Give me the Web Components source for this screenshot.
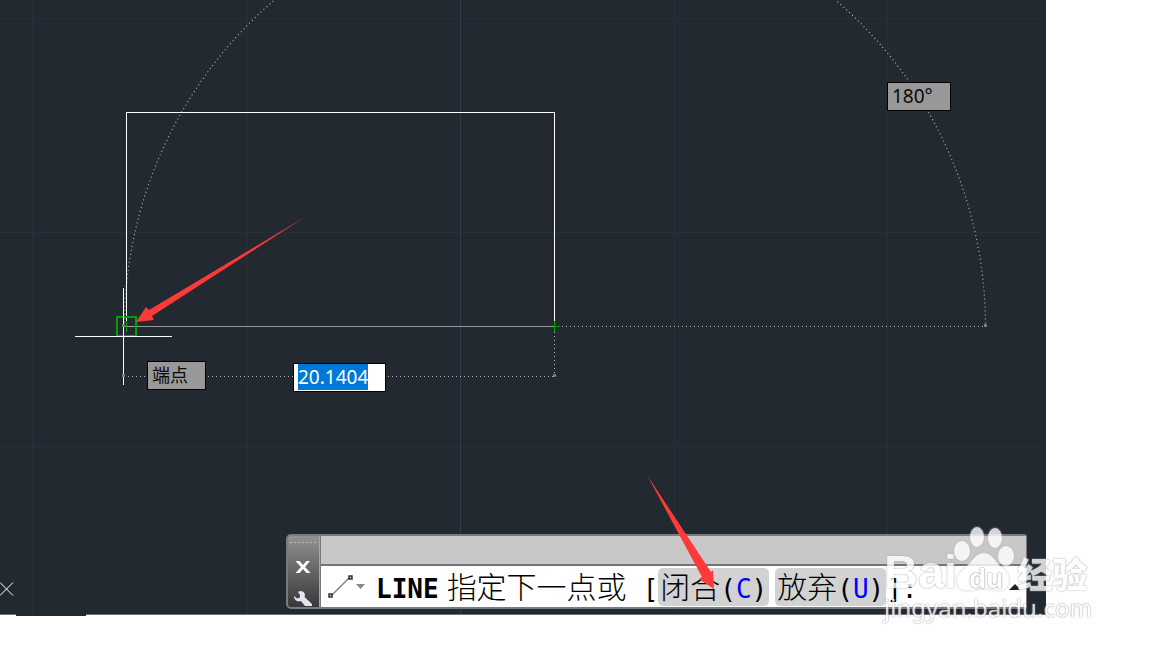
<!DOCTYPE html>
<html lang="zh-CN">
<head>
<meta charset="utf-8">
<title>CAD - LINE</title>
<style>
html, body { margin: 0; height: 100%; background: #fff; overflow: hidden; }
body { font-family: "Noto Sans", "Noto Sans CJK SC", sans-serif; }
</style>
</head>
<body>
<cad-workspace></cad-workspace>

<script>
const define = (name, html, ready) => {
  const tpl = document.createElement('template');
  tpl.innerHTML = html;
  customElements.define(name, class extends HTMLElement {
    constructor() {
      super();
      this.attachShadow({ mode: 'open' }).append(tpl.content.cloneNode(true));
    }
    connectedCallback() { if (ready) ready(this); }
  });
};

define('cad-tip', `
<style>
:host { display: block; box-sizing: border-box; padding: 0 17px 0 4px; border: 1px solid #000; background: #989898; color: #0a0a0a; font-size: 18px; line-height: 27px; white-space: nowrap; }
</style>
<slot></slot>`);

define('cad-length', `
<style>
:host { display: block; }
input { display: block; box-sizing: border-box; width: 93px; height: 29px; margin: 0; padding: 0 4px 2px; border: 1px solid #000; border-radius: 0; outline: 0; background: #fff; color: #0078d7; font: 19px/24px "Noto Sans", sans-serif; }
input::selection { background: #0078d7; color: #fff; }
</style>
<input type="text" aria-label="长度" value="20.1404">`, host => {
  const box = host.shadowRoot.querySelector('input');
  box.focus();
  box.select();
});

define('cad-drawing', `
<style>
:host { display: block; overflow: hidden; background: #222930; }
svg { display: block; width: 100%; height: 100%; }
.grid { stroke: #262f3b; }
.axis { stroke: #333a4d; }
.solid { stroke: #fff; fill: none; }
.dots { stroke: #b4b4b4; fill: none; stroke-dasharray: 1 3; }
.snap { stroke: #00a000; fill: none; }
</style>
<svg aria-hidden="true" shape-rendering="crispEdges">
  <path class="grid" d="M32.500 0V614M247.500 0V614M674.500 0V614M887.500 0V614M0 18.500H1043M0 232.500H1043M0 446.500H1043"/>
  <path class="axis" d="M460.500 0V614"/>
  <path class="dots" shape-rendering="auto" stroke-width="1.200" d="M124.500 326.500A430.500 430.500 0 0 1 985.500 326.500"/>
  <path class="dots" d="M558 326.500H985M554.500 332V376M124 376.500H554"/>
  <path class="solid" d="M126.500 321V112.500H554.500V321"/>
  <path stroke="#999" d="M124 326.500H554"/>
  <path class="snap" d="M126.500 321V332M554.500 321V332M554 326.500H560"/>
  <rect class="snap" x="117" y="317" width="19" height="19" stroke-width="2"/>
  <path class="solid" d="M123.500 288V385M75 336.500H172"/>
  <path fill="#777c80" d="M122 324h3v3h-3zM122 374h3v3h-3zM553 374h3v3h-3zM984 324h3v3h-3z"/>
  <path class="solid" d="M0 582.500L13 595.500M0 595.500L13 582.500" shape-rendering="auto"/>
</svg>`);

define('cad-arrows', `
<style>
:host { display: block; z-index: 1; pointer-events: none; }
svg { display: block; width: 100%; height: 100%; }
</style>
<svg aria-hidden="true" fill="#fd3a38">
  <path d="M305 217L152 316L154 320L136 322L146 307L149 310Z"/>
  <path d="M647 475L711 572L713 570L714 589L699 579L702 577Z"/>
</svg>`);

define('command-line', `
<style>
:host { display: flex; box-sizing: border-box; height: 75px; border: 2px solid #7b7b7b; border-right-width: 1px; border-radius: 5px 3px 2px 5px; background: #7b7b7b; color: #000; }
button { margin: 0; padding: 0; border: 0; background: none; color: inherit; font: inherit; }
svg { display: block; }
.grip { display: flex; flex: none; box-sizing: border-box; flex-direction: column; align-items: center; width: 32px; padding-right: 2px; border-right: 1px solid #a8a8a8; border-radius: 3px 0 0 3px; background: linear-gradient(#929292, #383838); }
.grip i { width: 26px; height: 2px; margin: 6px 0 17px; background: repeating-linear-gradient(90deg, #bcbcbc 0 2px, transparent 2px 4px); }
.tool { margin-top: 16px; }
.main { display: flex; flex: 1; flex-direction: column; min-width: 0; margin-left: 1px; }
.history { height: 28px; background: #c8c8c8; border-bottom: 2px solid #757575; }
.prompt { display: flex; flex: 1; align-items: center; padding: 0 5px 0 7px; background: #fff; font: 30px/34px "Noto Sans CJK SC", sans-serif; font-weight: 300; white-space: nowrap; }
.zh { padding-bottom: 4px; }
.menu { display: flex; align-items: center; gap: 3px; margin-right: 11px; }
.mono, b { padding-top: 4px; font: 26px/34px "DejaVu Sans Mono", monospace; }
b { font-weight: bold; margin-right: 8px; }
.open { margin-left: 16px; }
.opt { display: flex; align-items: center; height: 38px; padding: 0 2px; border-radius: 5px; background: #d2d2d2; }
.opt + .opt { margin-left: 6px; }
kbd { font: inherit; color: #00f; }
.up { margin-left: auto; }
</style>
<div class="grip">
  <i></i>
  <button aria-label="关闭"><svg width="16" height="14" viewBox="0 0 16 14"><path fill="#fff" d="M.5 1H4.500L8 5L11.500 1H15L10 7L15.500 13H11.500L8 9L4.500 13H.5L6 7Z"/></svg></button>
  <button class="tool" aria-label="自定义"><svg width="20" height="17" viewBox="0 0 20 17"><path fill="#e2e6ee" d="M7 1C11 1 13 4 11.500 7L19 14V16H12L8 11C4 12 1 10 1 6L4 8.500L7 7.500V5L5 2Z"/></svg></button>
</div>
<div class="main">
  <div class="history"></div>
  <div class="prompt">
    <button class="menu" aria-label="最近使用的命令">
      <svg width="25" height="26" viewBox="0 0 25 26"><path d="M3 22L21 4" stroke="#80838a" stroke-width="1.500"/><path d="M1 20h3v3h-3zM21 2h3v3h-3z" fill="#c6cbd6" stroke="#32343c" stroke-width="1.500"/></svg>
      <svg width="9" height="5" viewBox="0 0 9 5"><path fill="#888" d="M0 0H9L4.500 5Z"/></svg>
    </button>
    <b>LINE</b><span class="zh">指定下一点或</span><span class="mono open">[</span>
    <button class="opt"><span class="zh">闭合</span><span class="mono">(<kbd>C</kbd>)</span></button>
    <button class="opt"><span class="zh">放弃</span><span class="mono">(<kbd>U</kbd>)</span></button>
    <span class="mono">]:</span>
    <button class="up" aria-label="展开"><svg width="12" height="6" viewBox="0 0 12 6"><path fill="#231f20" d="M0 6L6 0L12 6Z"/></svg></button>
  </div>
</div>`);

define('site-mark', `
<style>
:host { display: block; width: 208px; opacity: .8; color: #fff; white-space: nowrap; pointer-events: none; }
svg { position: absolute; left: 69px; top: 4px; filter: drop-shadow(0 0 1px #aaa); }
.name { display: flex; align-items: baseline; padding-top: 26px; font: bold 47px/46px "Liberation Sans", sans-serif; text-shadow: 0 0 2px #999, 0 0 1px #bbb; }
.du { position: relative; width: 58px; text-align: center; font-size: 28px; text-shadow: 0 0 2px #777, 0 0 1px #888; }
.cn { margin-left: 2px; font: 900 35px/46px "Noto Sans CJK SC", sans-serif; }
.url { margin-top: -7px; font: 24px/26px "Noto Sans", sans-serif; text-shadow: 0 0 2px #888, 0 0 1px #aaa; }
</style>
<svg width="66" height="66" viewBox="0 0 66 66" aria-hidden="true" fill="#fff">
  <ellipse cx="9" cy="24" rx="8" ry="10"/><ellipse cx="24" cy="10" rx="7" ry="10"/><ellipse cx="42" cy="11" rx="7" ry="10"/><ellipse cx="53" cy="29" rx="8" ry="10"/>
  <path d="M31 26C38 26 41 32 45 37C50 42 57 46 56 54C55 62 49 65 41 63C34 61 28 61 21 63C12 65 5 63 4 55C3 47 11 43 16 37C21 31 24 26 31 26Z"/>
</svg>
<div class="name"><span>Bai</span><span class="du">du</span><span class="cn">经验</span></div>
<div class="url">jingyan.baidu.com</div>`);

define('cad-workspace', `
<style>
:host { display: grid; grid-template-rows: 1fr 34px; height: 100vh; position: relative; }
.stage { position: relative; display: grid; margin-right: 106px; min-height: 0; background: #222930; }
.stage > * { grid-area: 1 / 1; min-width: 0; min-height: 0; }
.tabs { display: flex; align-items: flex-start; margin-right: 106px; }
.tabs i { height: 1px; background: #6e7072; }
.tabs i:nth-child(1) { width: 16px; }
.tabs i:nth-child(2) { width: 70px; height: 2px; background: #222930; }
.tabs i:nth-child(3) { flex: 1; }
.angle, .end, .length, command-line, site-mark { position: absolute; }
.angle { left: 887px; top: 82px; font-size: 19px; }
.end { left: 147px; top: 361px; }
.length { left: 293px; top: 363px; }
command-line { left: 286px; right: 19px; bottom: 5px; }
site-mark { right: 60px; bottom: 27px; }
</style>
<main class="stage">
  <cad-drawing></cad-drawing>
  <cad-tip class="angle">180°</cad-tip>
  <cad-tip class="end">端点</cad-tip>
  <cad-length class="length"></cad-length>
  <command-line></command-line>
  <cad-arrows></cad-arrows>
</main>
<div class="tabs"><i></i><i></i><i></i></div>
<site-mark></site-mark>`);
</script>
</body>
</html>
